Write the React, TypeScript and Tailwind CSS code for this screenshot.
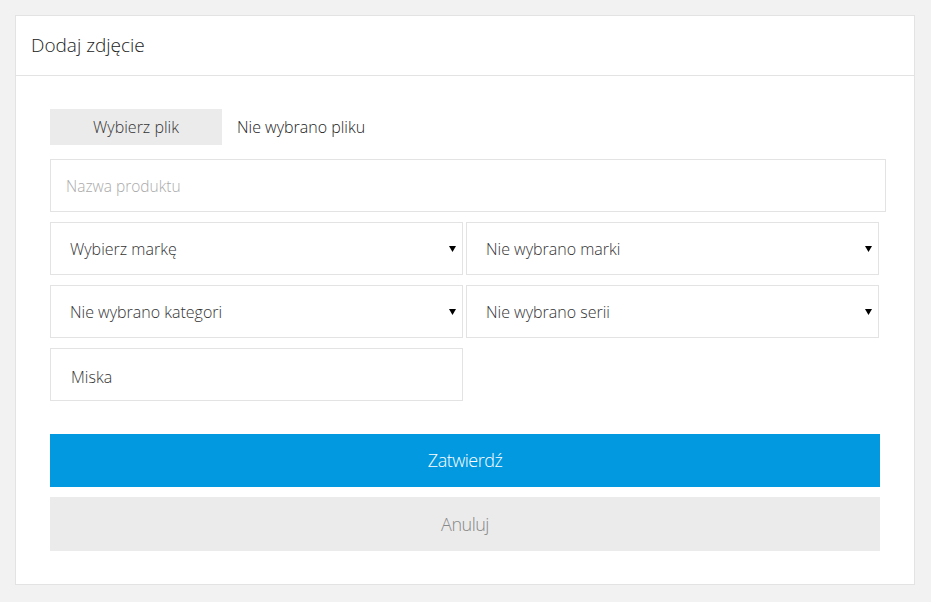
import type { ReactNode } from 'react'

const font = { fontFamily: '"Open Sans", "Noto Sans", sans-serif' }

function Caret() {
  return (
    <svg className="w-[7px] h-[6px] text-black" viewBox="0 0 7 6" fill="currentColor">
      <path d="M0 0h7L3.5 6z" />
    </svg>
  )
}

function SelectBox({ children }: { children: ReactNode }) {
  return (
    <div className="flex items-center justify-between w-[413px] h-[53px] border border-[#e3e3e3] bg-white pl-[19px] pr-[6px]">
      <span className="text-[16px] font-light text-[#333]">{children}</span>
      <Caret />
    </div>
  )
}

export default function App() {
  return (
    <div className="min-h-screen bg-[#f2f2f2] pt-[15px] pl-[15px]" style={font}>
      <div className="w-[900px] h-[570px] bg-white border border-[#e3e3e3]">
        <header className="h-[60px] border-b border-[#e3e3e3] flex items-center pl-[15px]">
          <h1 className="text-[19px] font-light text-[#222]">Dodaj zdjęcie</h1>
        </header>

        <div className="pt-[33px] pl-[34px] flex flex-col">
          <div className="flex items-center">
            <button className="w-[172px] h-[36px] bg-[#ebebeb] text-[16px] font-light text-[#333]">Wybierz plik</button>
            <span className="ml-[15px] text-[16px] font-light text-[#222]">Nie wybrano pliku</span>
          </div>

          <input
            type="text"
            placeholder="Nazwa produktu"
            className="mt-[14px] w-[836px] h-[53px] border border-[#e3e3e3] px-[15px] text-[15.5px] font-light text-[#333] placeholder-[#aaa] outline-none"
          />

          <div className="mt-[10px] flex gap-[3px]">
            <SelectBox>Wybierz markę</SelectBox>
            <SelectBox>Nie wybrano marki</SelectBox>
          </div>
          <div className="mt-[10px] flex gap-[3px]">
            <SelectBox>Nie wybrano kategori</SelectBox>
            <SelectBox>Nie wybrano serii</SelectBox>
          </div>

          <div className="mt-[10px] w-[413px] h-[53px] border border-[#e3e3e3] flex items-center pl-[20px] pt-[4px]">
            <span className="text-[16px] font-light text-[#333]">Miska</span>
          </div>

          <button className="mt-[33px] w-[830px] h-[53px] bg-[#0399e0] text-white text-[18px] font-light tracking-[-0.5px]">
            Zatwierdź
          </button>
          <button className="mt-[10px] w-[830px] h-[54px] bg-[#ebebeb] text-[#888] text-[18px] font-light tracking-[-0.5px]">
            Anuluj
          </button>
        </div>
      </div>
    </div>
  )
}
